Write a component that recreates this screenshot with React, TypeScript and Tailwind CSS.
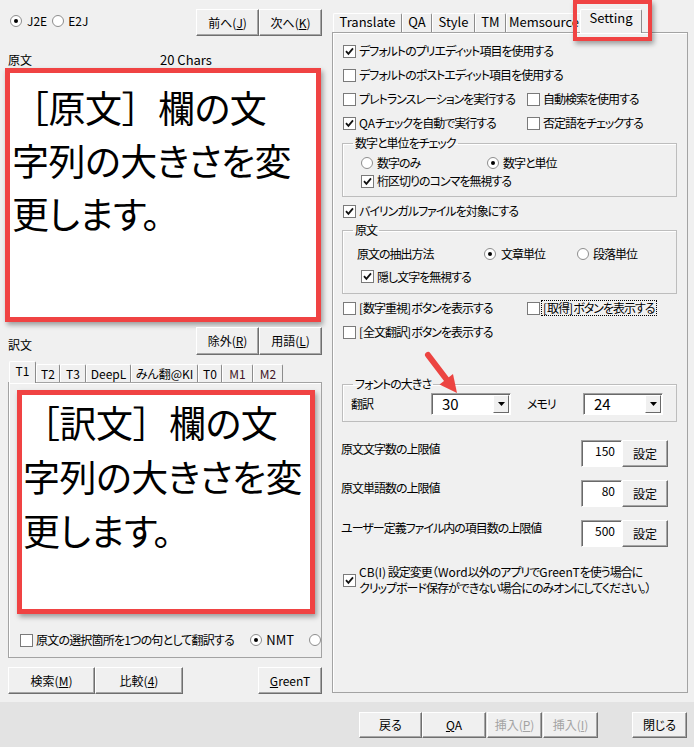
import React from "react";

type Kids = { children?: React.ReactNode };

function Check({ on = false }: { on?: boolean }) {
  return (
    <span className="inline-flex h-[13px] w-[13px] shrink-0 items-center justify-center border border-[#7a7a7a] bg-white">
      {on && (
        <svg width="9" height="9" viewBox="0 0 9 9">
          <path d="M1 4.2 L3.4 6.8 L8 1.4" stroke="#111" strokeWidth="1.8" fill="none" />
        </svg>
      )}
    </span>
  );
}

function Radio({ on = false }: { on?: boolean }) {
  return (
    <span className="inline-flex h-[12px] w-[12px] shrink-0 items-center justify-center rounded-full border border-[#8d8d8d] bg-white">
      {on && <span className="h-[4px] w-[4px] rounded-full bg-black" />}
    </span>
  );
}

function Btn({ children, className = "", disabled = false }: Kids & { className?: string; disabled?: boolean }) {
  return (
    <div
      className={`flex shrink-0 items-center justify-center border border-t-white border-l-white border-r-[#6f6f6f] border-b-[#6f6f6f] bg-[#f0f0f0] text-[12px] leading-[14px] tracking-normal shadow-[inset_-1px_-1px_0_#a6a6a6] ${
        disabled ? "text-[#a3a3a3]" : "text-black"
      } ${className}`}
    >
      {children}
    </div>
  );
}

function Tab({ children, className = "", active = false }: Kids & { className?: string; active?: boolean }) {
  return (
    <div
      className={`flex shrink-0 justify-center rounded-t-[2px] border-l border-r border-t border-l-white border-t-white border-r-[#8c8c8c] bg-[#f0f0f0] ${
        active ? "relative z-10 -mb-px items-start" : "items-center"
      } ${className}`}
    >
      {children}
    </div>
  );
}

function CheckLabel({ on = false, children }: Kids & { on?: boolean }) {
  return (
    <div className="flex items-center gap-[3px] whitespace-nowrap">
      <Check on={on} />
      <span>{children}</span>
    </div>
  );
}

// latin runs keep normal spacing inside the tightened japanese labels
function Lat({ children }: Kids) {
  return <span className="tracking-normal">{children}</span>;
}

function Combo({ value }: { value: string }) {
  return (
    <div className="flex h-[22px] w-[80px] shrink-0 border border-t-[#a0a0a0] border-l-[#a0a0a0] border-r-white border-b-white bg-white tracking-normal shadow-[inset_1px_1px_0_#696969]">
      <span className="flex-1 pl-[10px] text-[15px] leading-[20px]">{value}</span>
      <span className="m-[1px] flex w-[16px] items-center justify-center border border-t-white border-l-white border-r-[#696969] border-b-[#696969] bg-[#f0f0f0]">
        <svg width="7" height="4" viewBox="0 0 7 4">
          <path d="M0 0h7L3.5 4z" fill="#000" />
        </svg>
      </span>
    </div>
  );
}

function NumBox({ value }: { value: string }) {
  return (
    <div className="h-[27px] w-[41px] shrink-0 border border-t-[#a0a0a0] border-l-[#a0a0a0] border-r-white border-b-white bg-white pr-[6px] pt-[2px] text-right leading-[16px] tracking-normal shadow-[inset_1px_1px_0_#696969]">
      {value}
    </div>
  );
}

const fw = "[font-feature-settings:normal]";

function LeftPane() {
  return (
    <div className="flex w-[330px] shrink-0 flex-col">
      {/* direction + prev/next */}
      <div className="flex h-[51px] items-start pl-[10px] pr-[8px]">
        <div className="mt-[14px] flex items-center leading-[14px]">
          <Radio on />
          <span className="ml-[5px]">J2E</span>
          <span className="ml-[5px] flex">
            <Radio />
          </span>
          <span className="ml-[4px]">E2J</span>
        </div>
        <div className="ml-auto mt-[9px] flex">
          <Btn className="h-[27px] w-[63px]">
            前へ(<u>J</u>)
          </Btn>
          <Btn className="h-[27px] w-[63px]">
            次へ(<u>K</u>)
          </Btn>
        </div>
      </div>

      <div className="flex h-[17px] items-center pl-[8px] leading-[16px]">
        <span className="w-[152px]">原文</span>
        <span className="text-[13px]">20 Chars</span>
      </div>

      {/* source text */}
      <div className="ml-[5px] h-[254px] w-[316px] border-[5px] border-[#f04343] bg-white pl-[2px] pt-[8px] shadow-[2px_3px_5px_rgba(0,0,0,0.35)]">
        <div className="whitespace-nowrap text-[37px] leading-[53px] tracking-[-0.5px]">
          <span className={fw}>［</span>原文<span className={fw}>］</span>欄の文
          <br />
          字列の大きさを変
          <br />
          更します。
        </div>
      </div>

      <div className="mt-[5px] flex h-[33px] items-start pl-[8px] pr-[8px]">
        <span className="mt-[10px] leading-[16px]">訳文</span>
        <div className="ml-auto flex">
          <Btn className="h-[28px] w-[63px]">
            除外(<u>R</u>)
          </Btn>
          <Btn className="h-[28px] w-[63px]">
            用語(<u>L</u>)
          </Btn>
        </div>
      </div>

      {/* engine tabs */}
      <div className="flex h-[22px] items-end pl-[9px] leading-[14px]">
        <Tab active className="h-[22px] w-[27px] pt-[2px]">
          T1
        </Tab>
        <Tab className="h-[18px] w-[24px]">T2</Tab>
        <Tab className="h-[18px] w-[26px]">T3</Tab>
        <Tab className="h-[18px] w-[45px]">DeepL</Tab>
        <Tab className="h-[18px] w-[67px]">みん翻@KI</Tab>
        <Tab className="h-[18px] w-[24px]">T0</Tab>
        <Tab className="h-[18px] w-[31px] text-[#3f1526]">M1</Tab>
        <Tab className="h-[18px] w-[30px] text-[#3f1526]">M2</Tab>
      </div>

      <div className="ml-[8px] flex h-[276px] w-[314px] flex-col overflow-hidden border border-[#a3a3a3] shadow-[inset_1px_1px_0_#fff]">
        <div className="ml-[8px] mt-[7px] h-[224px] w-[298px] shrink-0 border-[5px] border-[#f04343] bg-white pl-px shadow-[2px_3px_5px_rgba(0,0,0,0.35)]">
          <div className="whitespace-nowrap text-[37px] leading-[54px] tracking-[-0.5px]">
            <span className={fw}>［</span>訳文<span className={fw}>］</span>欄の文
            <br />
            字列の大きさを変
            <br />
            更します。
          </div>
        </div>
        <div className="mt-[17px] flex h-[18px] shrink-0 items-center whitespace-nowrap pl-[11px]">
          <div className="w-[241px] tracking-[-0.8px]">
            <CheckLabel>原文の選択箇所を1つの句として翻訳する</CheckLabel>
          </div>
          <Radio on />
          <span className="ml-[4px] text-[13px]">NMT</span>
          <span className="ml-[15px] flex">
            <Radio />
          </span>
        </div>
      </div>

      <div className="mt-[9px] flex pl-[8px] pr-[8px]">
        <Btn className="h-[27px] w-[87px]">
          検索(<u>M</u>)
        </Btn>
        <Btn className="h-[27px] w-[88px]">
          比較(<u>4</u>)
        </Btn>
        <Btn className="ml-auto h-[27px] w-[64px]">
          <u>G</u>reenT
        </Btn>
      </div>
    </div>
  );
}

function RightPane() {
  return (
    <div className="flex w-[364px] shrink-0 flex-col">
      <div className="flex h-[32px] items-end pl-[3px] text-[13px] leading-[16px]">
        <Tab className="h-[19px] w-[69px] pb-[2px]">Translate</Tab>
        <Tab className="h-[19px] w-[30px] pb-[2px]">QA</Tab>
        <Tab className="h-[19px] w-[43px] pb-[2px]">Style</Tab>
        <Tab className="h-[19px] w-[31px] pb-[2px]">TM</Tab>
        <Tab className="h-[19px] w-[76px] overflow-hidden pb-[2px]">Memsource</Tab>
        <Tab active className="-ml-[2px] h-[24px] w-[62px]">
          Setting
        </Tab>
      </div>

      <div className="ml-[2px] h-[661px] w-[356px] border border-[#a3a3a3] pl-[10px] pt-[6px] leading-[16px] tracking-[-1px] shadow-[inset_1px_1px_0_#fff]">
        <div className="flex h-6 items-center">
          <CheckLabel on>デフォルトのプリエディット項目を使用する</CheckLabel>
        </div>
        <div className="flex h-6 items-center">
          <CheckLabel>デフォルトのポストエディット項目を使用する</CheckLabel>
        </div>
        <div className="flex h-6 items-center">
          <div className="w-[184px]">
            <CheckLabel>プレトランスレーションを実行する</CheckLabel>
          </div>
          <CheckLabel>自動検索を使用する</CheckLabel>
        </div>
        <div className="flex h-6 items-center">
          <div className="w-[184px]">
            <CheckLabel on>
              <Lat>QA</Lat>チェックを自動で実行する
            </CheckLabel>
          </div>
          <CheckLabel>否定語をチェックする</CheckLabel>
        </div>

        <fieldset className="-ml-px mt-px w-[335px] border border-[#bdbdbd] pb-[6px] shadow-[inset_1px_1px_0_#fff]">
          <legend className="ml-[10px] px-[2px] leading-[14px]">数字と単位をチェック</legend>
          <div className="mt-[4px] flex h-[18px] items-center pl-[18px]">
            <div className="flex w-[126px] items-center gap-[4px]">
              <Radio />
              <span>数字のみ</span>
            </div>
            <div className="flex items-center gap-[4px]">
              <Radio on />
              <span>数字と単位</span>
            </div>
          </div>
          <div className="flex h-[18px] items-center pl-[18px]">
            <CheckLabel on>桁区切りのコンマを無視する</CheckLabel>
          </div>
        </fieldset>

        <div className="mt-[2px] flex h-6 items-center">
          <CheckLabel on>バイリンガルファイルを対象にする</CheckLabel>
        </div>

        <fieldset className="-ml-px w-[335px] border border-[#bdbdbd] pb-[5px] shadow-[inset_1px_1px_0_#fff]">
          <legend className="ml-[10px] px-[2px] leading-[14px]">原文</legend>
          <div className="mt-[5px] flex h-[23px] items-center pl-[14px]">
            <span className="w-[127px]">原文の抽出方法</span>
            <div className="flex w-[93px] items-center gap-[5px]">
              <Radio on />
              <span>文章単位</span>
            </div>
            <div className="flex items-center gap-[4px]">
              <Radio />
              <span>段落単位</span>
            </div>
          </div>
          <div className="flex h-[23px] items-center pl-[18px]">
            <CheckLabel on>隠し文字を無視する</CheckLabel>
          </div>
        </fieldset>

        <div className="mt-[2px] flex h-6 items-center">
          <div className="w-[184px]">
            <CheckLabel>
              <Lat>[</Lat>数字重視<Lat>]</Lat>ボタンを表示する
            </CheckLabel>
          </div>
          <div className="flex items-center gap-px whitespace-nowrap">
            <Check />
            <span className="border border-dotted border-black px-[1px] leading-[14px]">
              <Lat>[</Lat>取得<Lat>]</Lat>ボタンを表示する
            </span>
          </div>
        </div>
        <div className="flex h-6 items-center">
          <CheckLabel>
            <Lat>[</Lat>全文翻訳<Lat>]</Lat>ボタンを表示する
          </CheckLabel>
        </div>

        <fieldset className="-ml-px mt-[33px] w-[335px] border border-[#bdbdbd] pb-[6px] shadow-[inset_1px_1px_0_#fff]">
          <legend className="ml-[10px] px-[2px] leading-[14px]">フォントの大きさ</legend>
          <div className="mt-[2px] flex h-[22px] items-center pl-[8px]">
            <span className="w-[80px]">翻訳</span>
            <Combo value="30" />
            <span className="ml-[16px] w-[56px]">メモリ</span>
            <Combo value="24" />
          </div>
        </fieldset>

        <div className="-ml-[2px] mt-[18px] flex h-[27px] items-start">
          <span className="w-[240px] pt-[2px] leading-[14px]">原文文字数の上限値</span>
          <NumBox value="150" />
          <Btn className="h-[27px] w-[46px]">設定</Btn>
        </div>
        <div className="-ml-[2px] mt-[13px] flex h-[27px] items-start">
          <span className="w-[240px] pt-[1px] leading-[14px]">原文単語数の上限値</span>
          <NumBox value="80" />
          <Btn className="h-[27px] w-[46px]">設定</Btn>
        </div>
        <div className="-ml-[2px] mt-[13px] flex h-[27px] items-start">
          <span className="w-[240px] pt-[1px] leading-[14px]">ユーザー定義ファイル内の項目数の上限値</span>
          <NumBox value="500" />
          <Btn className="h-[27px] w-[46px]">設定</Btn>
        </div>

        <div className="mt-[17px] flex items-center gap-[3px]">
          <Check on />
          <div className="whitespace-nowrap leading-[16px]">
            <Lat>CB(I)</Lat> 設定変更<Lat>（Word</Lat>以外のアプリで<Lat>GreenT</Lat>を使う場合に
            <br />
            クリップボード保存ができない場合にのみオンにしてください。）
          </div>
        </div>
      </div>
    </div>
  );
}

export default function App() {
  return (
    <div className="relative flex h-[747px] w-[694px] flex-col overflow-hidden bg-[#e3e3e3] font-['Noto_Sans_CJK_JP','Noto_Sans',sans-serif] text-[12px] text-black [font-feature-settings:'palt']">
      <div className="flex h-[702px] shrink-0 bg-[#f0f0f0]">
        <LeftPane />
        <RightPane />
      </div>

      <div className="flex h-[45px] items-start pl-[359px] pt-[10px]">
        <Btn className="h-[26px] w-[63px]">戻る</Btn>
        <Btn className="h-[26px] w-[64px]">
          <u>Q</u>A
        </Btn>
        <Btn disabled className="ml-px h-[26px] w-[55px]">
          挿入(<u>P</u>)
        </Btn>
        <Btn disabled className="ml-px h-[26px] w-[55px]">
          挿入(<u>I</u>)
        </Btn>
        <Btn className="ml-[34px] h-[26px] w-[55px]">閉じる</Btn>
      </div>

      {/* annotation: highlight around the Setting tab */}
      <div className="absolute left-[573px] top-0 h-[41px] w-[79px] border-4 border-[#f04343] shadow-[2px_3px_5px_rgba(0,0,0,0.35)]" />

      {/* annotation: arrow pointing at the font size */}
      <svg className="absolute left-[420px] top-[345px]" width="50" height="55" viewBox="0 0 50 55">
        <line x1="8" y1="10" x2="27" y2="35" stroke="#ec4441" strokeWidth="6" strokeLinecap="round" />
        <polygon points="37,48 19.5,39.5 33,29" fill="#ec4441" />
      </svg>
    </div>
  );
}
